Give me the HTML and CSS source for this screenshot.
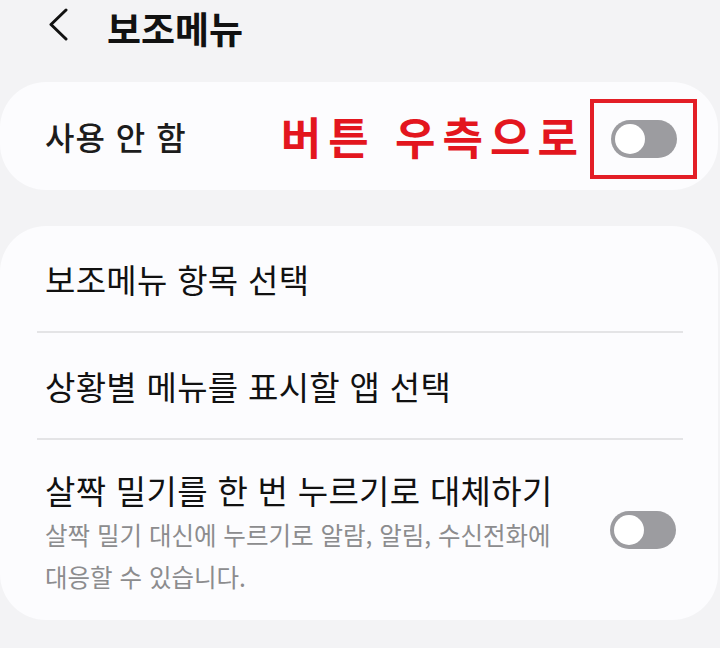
FILE: index.html
```html
<!DOCTYPE html>
<html lang="ko">
<head>
    <meta charset="UTF-8">
    <meta name="viewport" content="width=device-width, initial-scale=1.0">
    <title>보조메뉴</title>
    <link rel="stylesheet" href="styles.css">
</head>
<body>

    <!-- Header -->
    <div class="header">
        <svg class="back" width="22" height="34" viewBox="0 0 22 34">
            <polyline points="18,2 3,16.5 18,31" fill="none" stroke="#111" stroke-width="3" stroke-linecap="round" stroke-linejoin="round"/>
        </svg>
        <h1>보조메뉴</h1>
    </div>

    <!-- Master switch -->
    <div class="card master">
        <span class="master-label">사용 안 함</span>
        <span class="note">버튼 우측으로</span>
        <div class="mark">
            <div class="switch"><div class="knob"></div></div>
        </div>
    </div>

    <!-- Options -->
    <div class="card options">
        <div class="row">
            <span class="row-title">보조메뉴 항목 선택</span>
        </div>
        <div class="divider"></div>
        <div class="row">
            <span class="row-title">상황별 메뉴를 표시할 앱 선택</span>
        </div>
        <div class="divider"></div>
        <div class="row row-tall">
            <div class="row-text">
                <div class="row-title">살짝 밀기를 한 번 누르기로 대체하기</div>
                <div class="row-sub">살짝 밀기 대신에 누르기로 알람, 알림, 수신전화에<br>대응할 수 있습니다.</div>
            </div>
            <div class="switch"><div class="knob"></div></div>
        </div>
    </div>

</body>
</html>
```

FILE: styles.css
```css
/* Page */
body {
    margin: 0;
    background-color: #f3f3f5;
    font-family: "Noto Sans CJK KR", "Noto Sans", sans-serif;
    color: #111;
}

/* Header */
.header {
    display: flex;
    align-items: center;
    height: 55px;
    padding-left: 48px;
}

.back {
    margin-top: -6px;
}

.header h1 {
    margin: 0 0 0 37px;
    font-size: 37px;
    font-weight: 700;
    line-height: normal;
}

/* Cards */
.card {
    background-color: #fcfcfe;
    border-radius: 46px;
    margin-right: 2px;
}

.master {
    display: flex;
    align-items: center;
    height: 108px;
    margin-top: 27px;
    padding: 0 21px 0 45px;
}

.master-label {
    font-size: 32px;
    font-weight: 500;
    letter-spacing: 1px;
    color: #1c1c1c;
}

.note {
    margin-left: auto;
    margin-right: 5px;
    font-size: 44px;
    font-weight: 700;
    letter-spacing: 7px;
    color: #e3161e;
}

.mark {
    display: flex;
    align-items: center;
    justify-content: center;
    width: 99px;
    height: 72px;
    border: 4px solid #e31e26;
    margin-top: 6px;
}

/* Toggle switch (off) */
.switch {
    position: relative;
    width: 66px;
    height: 38px;
    border-radius: 19px;
    background-color: #9c9ca0;
    flex-shrink: 0;
}

.knob {
    position: absolute;
    left: 4px;
    top: 4px;
    width: 30px;
    height: 30px;
    border-radius: 50%;
    background-color: #fff;
}

/* Options list */
.options {
    margin-top: 36px;
}

.row {
    display: flex;
    align-items: center;
    height: 105px;
    padding: 0 42px 0 45px;
}

.row-tall {
    height: 180px;
    justify-content: space-between;
}

.row-title {
    font-size: 33px;
    letter-spacing: 0.3px;
    line-height: 44px;
    color: #111;
}

.row-tall .row-title {
    margin-top: 6px;
}

.row-sub {
    margin-top: 2px;
    font-size: 24.5px;
    line-height: 42px;
    color: #8c8c8e;
}

.divider {
    height: 2px;
    background-color: #e4e4e6;
    margin: 0 35px 0 37px;
}
```
